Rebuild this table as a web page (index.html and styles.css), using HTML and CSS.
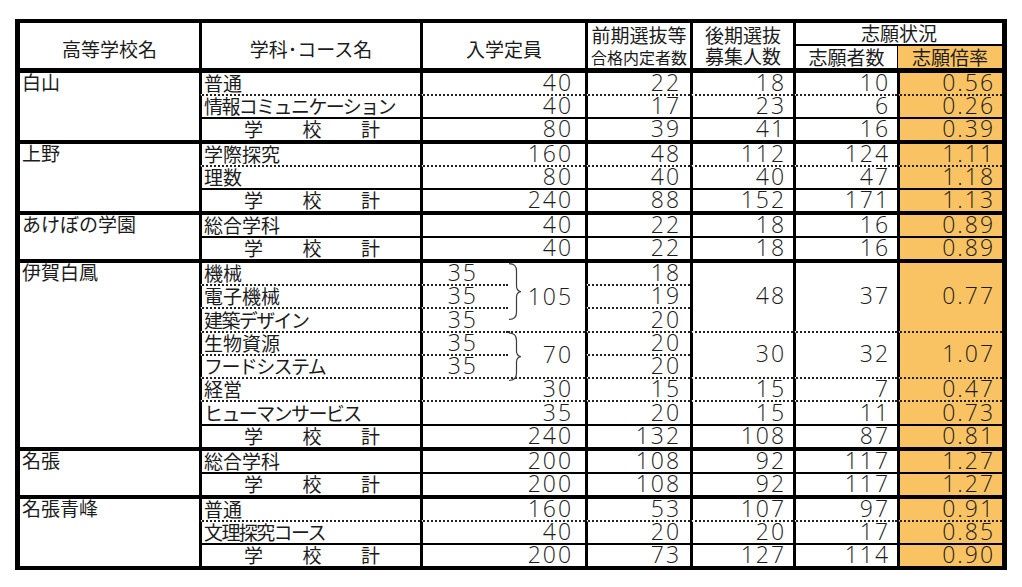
FILE: index.html
```html
<!DOCTYPE html>
<html lang="ja">
<head>
<meta charset="utf-8">
<title>志願状況</title>
<link rel="stylesheet" href="styles.css">
</head>
<body>
<div class="sheet">
<table class="t">
<colgroup>
<col class="w1"><col class="w2"><col class="w3a"><col class="w3b"><col class="w4"><col class="w5"><col class="w6"><col class="w7">
</colgroup>
<thead>
<tr class="h1">
<th class="first hd" rowspan="2">高等学校名</th>
<th class="hd" rowspan="2">学科･コース名</th>
<th class="hd" rowspan="2" colspan="2">入学定員</th>
<th class="two" rowspan="2">前期選抜等<br><span class="sm">合格内定者数</span></th>
<th class="two" rowspan="2">後期選抜<br>募集人数</th>
<th class="top" colspan="2">志願状況</th>
</tr>
<tr class="h2">
<th class="sub">志願者数</th>
<th class="sub o tl">志願倍率</th>
</tr>
</thead>
<tbody>
<tr class="g0">
<td class="sch" rowspan="3">白山</td>
<td class="cn">普通</td>
<td class="n q" colspan="2">40</td><td class="n p">22</td><td class="n">18</td><td class="n">10</td><td class="n o">0.56</td>
</tr>
<tr class="d">
<td class="cn k">情報コミュニケーション</td>
<td class="n q" colspan="2">40</td><td class="n p">17</td><td class="n">23</td><td class="n">6</td><td class="n o">0.26</td>
</tr>
<tr class="s">
<td class="cn"><div class="tk"><span>学</span><span>校</span><span>計</span></div></td>
<td class="n q" colspan="2">80</td><td class="n p">39</td><td class="n">41</td><td class="n">16</td><td class="n o">0.39</td>
</tr>

<tr class="g">
<td class="sch" rowspan="3">上野</td>
<td class="cn">学際探究</td>
<td class="n q" colspan="2">160</td><td class="n p">48</td><td class="n">112</td><td class="n">124</td><td class="n o">1.11</td>
</tr>
<tr class="d">
<td class="cn">理数</td>
<td class="n q" colspan="2">80</td><td class="n p">40</td><td class="n">40</td><td class="n">47</td><td class="n o">1.18</td>
</tr>
<tr class="s">
<td class="cn"><div class="tk"><span>学</span><span>校</span><span>計</span></div></td>
<td class="n q" colspan="2">240</td><td class="n p">88</td><td class="n">152</td><td class="n">171</td><td class="n o">1.13</td>
</tr>

<tr class="g">
<td class="sch" rowspan="2">あけぼの学園</td>
<td class="cn">総合学科</td>
<td class="n q" colspan="2">40</td><td class="n p">22</td><td class="n">18</td><td class="n">16</td><td class="n o">0.89</td>
</tr>
<tr class="s">
<td class="cn"><div class="tk"><span>学</span><span>校</span><span>計</span></div></td>
<td class="n q" colspan="2">40</td><td class="n p">22</td><td class="n">18</td><td class="n">16</td><td class="n o">0.89</td>
</tr>

<tr class="g">
<td class="sch" rowspan="8">伊賀白鳳</td>
<td class="cn">機械</td>
<td class="n a">35</td>
<td class="n br" rowspan="3"><div class="bw bw1"><svg class="brace" width="14" height="66" viewBox="0 0 14 66"><path d="M1 0.6 C6 0.6 8.5 3 8.5 8 L8.5 23 C8.5 26 10 28 12.8 28.6 C10 29.2 8.5 31 8.5 34 L8.5 49.5 C8.5 54 6 56.4 1 56.4"/></svg><span>105</span></div></td>
<td class="n p">18</td>
<td class="n m" rowspan="3">48</td><td class="n m" rowspan="3">37</td><td class="n m o" rowspan="3">0.77</td>
</tr>
<tr class="i d">
<td class="cn">電子機械</td>
<td class="n a">35</td><td class="n p">19</td>
</tr>
<tr class="i d">
<td class="cn k">建築デザイン</td>
<td class="n a">35</td><td class="n p">20</td>
</tr>
<tr class="i d">
<td class="cn">生物資源</td>
<td class="n a">35</td>
<td class="n br" rowspan="2"><div class="bw bw2"><svg class="brace" width="14" height="44" viewBox="0 0 14 44"><path d="M1 0 C6 0 8.5 2.5 8.5 7.5 L8.5 18 C8.5 21 10 23 12.8 23.6 C10 24.2 8.5 26 8.5 29 L8.5 40 C8.5 45 6 47.5 1 47.5"/></svg><span>70</span></div></td>
<td class="n p">20</td>
<td class="n m" rowspan="2">30</td><td class="n m" rowspan="2">32</td><td class="n m o" rowspan="2">1.07</td>
</tr>
<tr class="i d">
<td class="cn k">フードシステム</td>
<td class="n a">35</td><td class="n p">20</td>
</tr>
<tr class="i d">
<td class="cn">経営</td>
<td class="n q" colspan="2">30</td><td class="n p">15</td><td class="n">15</td><td class="n">7</td><td class="n o">0.47</td>
</tr>
<tr class="i d">
<td class="cn k">ヒューマンサービス</td>
<td class="n q" colspan="2">35</td><td class="n p">20</td><td class="n">15</td><td class="n">11</td><td class="n o">0.73</td>
</tr>
<tr class="i s">
<td class="cn"><div class="tk"><span>学</span><span>校</span><span>計</span></div></td>
<td class="n q" colspan="2">240</td><td class="n p">132</td><td class="n">108</td><td class="n">87</td><td class="n o">0.81</td>
</tr>

<tr class="g">
<td class="sch" rowspan="2">名張</td>
<td class="cn">総合学科</td>
<td class="n q" colspan="2">200</td><td class="n p">108</td><td class="n">92</td><td class="n">117</td><td class="n o">1.27</td>
</tr>
<tr class="s">
<td class="cn"><div class="tk"><span>学</span><span>校</span><span>計</span></div></td>
<td class="n q" colspan="2">200</td><td class="n p">108</td><td class="n">92</td><td class="n">117</td><td class="n o">1.27</td>
</tr>

<tr class="g">
<td class="sch" rowspan="3">名張青峰</td>
<td class="cn">普通</td>
<td class="n q" colspan="2">160</td><td class="n p">53</td><td class="n">107</td><td class="n">97</td><td class="n o">0.91</td>
</tr>
<tr class="d">
<td class="cn k">文理探究コース</td>
<td class="n q" colspan="2">40</td><td class="n p">20</td><td class="n">20</td><td class="n">17</td><td class="n o">0.85</td>
</tr>
<tr class="s">
<td class="cn"><div class="tk"><span>学</span><span>校</span><span>計</span></div></td>
<td class="n q" colspan="2">200</td><td class="n p">73</td><td class="n">127</td><td class="n">114</td><td class="n o">0.90</td>
</tr>
</tbody>
</table>
</div>
</body>
</html>
```
FILE: styles.css
```css
html, body {
  margin: 0;
  padding: 0;
  background: #fff;
}
body {
  font-family: "Noto Sans CJK JP", "Noto Sans", sans-serif;
  color: #1c1c1c;
}
.sheet {
  padding: 19px 0 0 15px;
}
.t {
  border-collapse: separate;
  border-spacing: 0;
  table-layout: fixed;
  width: 992px;
  border-style: solid;
  border-color: #000;
  border-width: 4px 5px 4px 5px;
}
.w1 { width: 179px; }
.w2 { width: 221px; }
.w3a { width: 88px; }
.w3b { width: 77px; }
.w4 { width: 105px; }
.w5 { width: 103px; }
.w6 { width: 104px; }
.w7 { width: 105px; }

th, td {
  padding: 0;
  border-left: 3px solid #000;
  font-weight: 400;
  font-size: 19px;
  line-height: 21px;
  white-space: nowrap;
  overflow: visible;
}
th {
  text-align: center;
}
.first {
  border-left: none;
}
.sch {
  border-left: none;
  text-align: left;
  vertical-align: top;
  padding-left: 2px;
  line-height: 18px;
}
.h1 { height: 20px; }
.h2 { height: 23px; }
.g0 { height: 26px; }
.g { height: 25px; }
.d, .s { height: 23px; }
.i { height: 23.3px; }

.g0 > td { border-top: 5px solid #000; }
.g > td { border-top: 4px solid #000; }
.d > td { border-top: 2px dotted #222; }
.s > td { border-top: 2px solid #000; }
.h2 > th { border-top: 2px solid #000; }

.hd {
  vertical-align: middle;
  padding-top: 5px;
}
.two {
  vertical-align: top;
  line-height: 21px;
  padding-top: 1px;
}
.sm {
  font-size: 16px;
}
.top {
  vertical-align: middle;
  line-height: 20px;
}
.sub {
  vertical-align: middle;
}
.tl {
  border-left-width: 1.5px;
}
.o {
  background: #f9c363;
}

.cn {
  text-align: left;
  padding-left: 2px;
  padding-bottom: 2px;
  line-height: 19px;
  vertical-align: bottom;
}
.k {
  letter-spacing: -1.6px;
}
.tk {
  display: flex;
  justify-content: space-between;
  padding: 0 40px 0 40px;
}

.n {
  font-family: "Open Sans", "Noto Sans", sans-serif;
  font-weight: 350;
  font-size: 23px;
  letter-spacing: 2px;
  text-align: right;
  vertical-align: bottom;
  line-height: 19px;
  padding-bottom: 2px;
  padding-right: 7px;
}
.q { padding-right: 12px; }
.p { padding-right: 9px; }
.a { padding-right: 30px; }
.m { vertical-align: middle; }

.br {
  border-left: none;
  vertical-align: top;
  padding-right: 12px;
  padding-bottom: 0;
}
.bw {
  display: flex;
  align-items: center;
  justify-content: space-between;
}
.bw1 { height: 66px; }
.bw2 { height: 44px; }
.brace {
  flex: none;
  overflow: visible;
}
.brace path {
  fill: none;
  stroke: #3a3a3a;
  stroke-width: 1.2;
}
```
